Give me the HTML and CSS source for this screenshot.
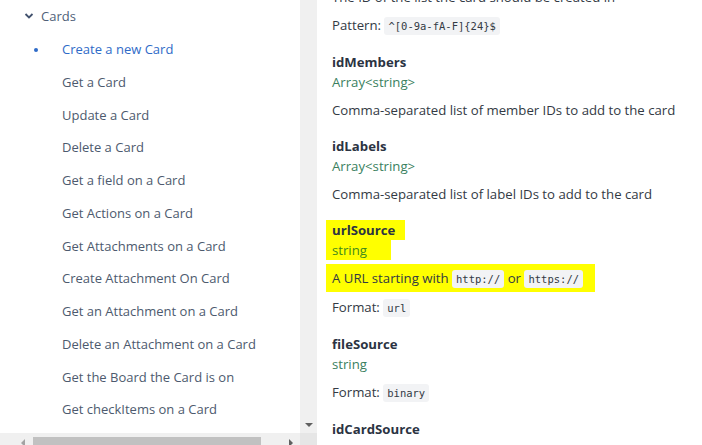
FILE: index.html
```html
<!DOCTYPE html>
<html>
<head>
<meta charset="utf-8">
<link rel="stylesheet" href="styles.css">
</head>
<body>
<div class="page">
  <div class="side">
    <div class="side-view">
      <div class="group">
        <svg class="chev" width="10" height="8" viewBox="0 0 10 8"><path d="M1.5 2 L5 5.5 L8.5 2" fill="none" stroke="#42526e" stroke-width="1.8"/></svg>
        <span>Cards</span>
      </div>
      <ul class="nav">
        <li class="active">Create a new Card</li>
        <li>Get a Card</li>
        <li>Update a Card</li>
        <li>Delete a Card</li>
        <li>Get a field on a Card</li>
        <li>Get Actions on a Card</li>
        <li>Get Attachments on a Card</li>
        <li>Create Attachment On Card</li>
        <li>Get an Attachment on a Card</li>
        <li>Delete an Attachment on a Card</li>
        <li>Get the Board the Card is on</li>
        <li>Get checkItems on a Card</li>
      </ul>
    </div>
    <div class="vscroll">
      <span class="arrow-down"></span>
    </div>
    <div class="hscroll">
      <span class="arrow-left"></span>
      <span class="thumb"></span>
      <span class="arrow-right"></span>
    </div>
    <div class="corner"></div>
  </div>
  <div class="main">
    <p class="desc top">The ID of the list the card should be created in</p>
    <p class="desc">Pattern: <code>^[0-9a-fA-F]{24}$</code></p>

    <div class="param">
      <div class="name">idMembers</div>
      <div class="type">Array&lt;string&gt;</div>
      <p class="desc">Comma-separated list of member IDs to add to the card</p>
    </div>

    <div class="param">
      <div class="name">idLabels</div>
      <div class="type">Array&lt;string&gt;</div>
      <p class="desc">Comma-separated list of label IDs to add to the card</p>
    </div>

    <div class="param">
      <div class="name"><span class="hl hl-name">urlSource</span></div>
      <div class="type"><span class="hl hl-type">string</span></div>
      <p class="desc"><span class="hl-desc">A URL starting with <code>http://</code> or <code>https://</code></span></p>
      <p class="desc">Format: <code>url</code></p>
    </div>

    <div class="param">
      <div class="name">fileSource</div>
      <div class="type">string</div>
      <p class="desc">Format: <code>binary</code></p>
    </div>

    <div class="param">
      <div class="name">idCardSource</div>
      <div class="type">string</div>
    </div>
  </div>
</div>
</body>
</html>
```
FILE: styles.css
```css
html, body {
  margin: 0;
  padding: 0;
  background: #fff;
  overflow: hidden;
}
body {
  width: 702px;
  height: 445px;
  font-family: "Open Sans", "Noto Sans", sans-serif;
  font-size: 13px;
}
.page {
  display: flex;
  height: 445px;
}
.side {
  width: 317px;
  flex: none;
  display: grid;
  grid-template-columns: 300px 17px;
  grid-template-rows: 433px 12px;
}
.side-view {
  overflow: hidden;
  padding-top: 5px;
}
.group {
  display: flex;
  align-items: center;
  height: 22px;
  padding-left: 24px;
  color: #505f79;
  gap: 7px;
  margin-bottom: 6px;
}
.chev {
  display: block;
}
.nav {
  list-style: none;
  margin: 0;
  padding: 0;
}
.nav li {
  height: 32.75px;
  line-height: 32.75px;
  padding-left: 62px;
  color: #4d5a6e;
  white-space: nowrap;
  position: relative;
}
.nav li.active {
  color: #2f6bc8;
}
.nav li.active::before {
  content: "";
  position: absolute;
  left: 34px;
  top: 15px;
  width: 4px;
  height: 4px;
  border-radius: 50%;
  background: #2f6bc8;
}
.vscroll {
  background: #f0f0f0;
  position: relative;
}
.arrow-down {
  position: absolute;
  left: 5px;
  bottom: 6px;
  width: 0;
  height: 0;
  border-left: 4px solid transparent;
  border-right: 4px solid transparent;
  border-top: 4px solid #606060;
}
.hscroll {
  background: #f0f0f0;
  position: relative;
}
.thumb {
  position: absolute;
  left: 33px;
  top: 4px;
  width: 228px;
  height: 12px;
  background: #c1c1c1;
}
.arrow-left {
  position: absolute;
  left: 21px;
  top: 6px;
  border-top: 4px solid transparent;
  border-bottom: 4px solid transparent;
  border-right: 4px solid #a3a3a3;
}
.arrow-right {
  position: absolute;
  left: 289px;
  top: 6px;
  border-top: 4px solid transparent;
  border-bottom: 4px solid transparent;
  border-left: 4px solid #606060;
}
.corner {
  background: #e6e6e6;
}
.main {
  flex: 1;
  padding-left: 15px;
  margin-top: -13px;
  color: #333a44;
  font-size: 13.2px;
}
.desc {
  margin: 8px 0 0;
  line-height: 20px;
}
.desc.top {
  margin-top: 0;
}
.param {
  margin-top: 16px;
}
.name {
  font-weight: 700;
  color: #2b3342;
  line-height: 20px;
}
.type {
  color: #3a7f5e;
  line-height: 20px;
}
code {
  font-family: "DejaVu Sans Mono", "Liberation Mono", monospace;
  font-size: 10.5px;
  background: #f2f3f5;
  padding: 3px 4px;
  border-radius: 3px;
  color: #333a44;
}
.hl {
  background: #ffff00;
  display: inline-block;
  margin-left: -6px;
  padding-left: 6px;
}
.hl-name { padding-right: 10px; }
.hl-type { padding-right: 24px; color: #3f8a1e; }
.hl-desc {
  background: #ffff00;
  margin-left: -6px;
  padding: 5px 12px 5px 6px;
}
```
